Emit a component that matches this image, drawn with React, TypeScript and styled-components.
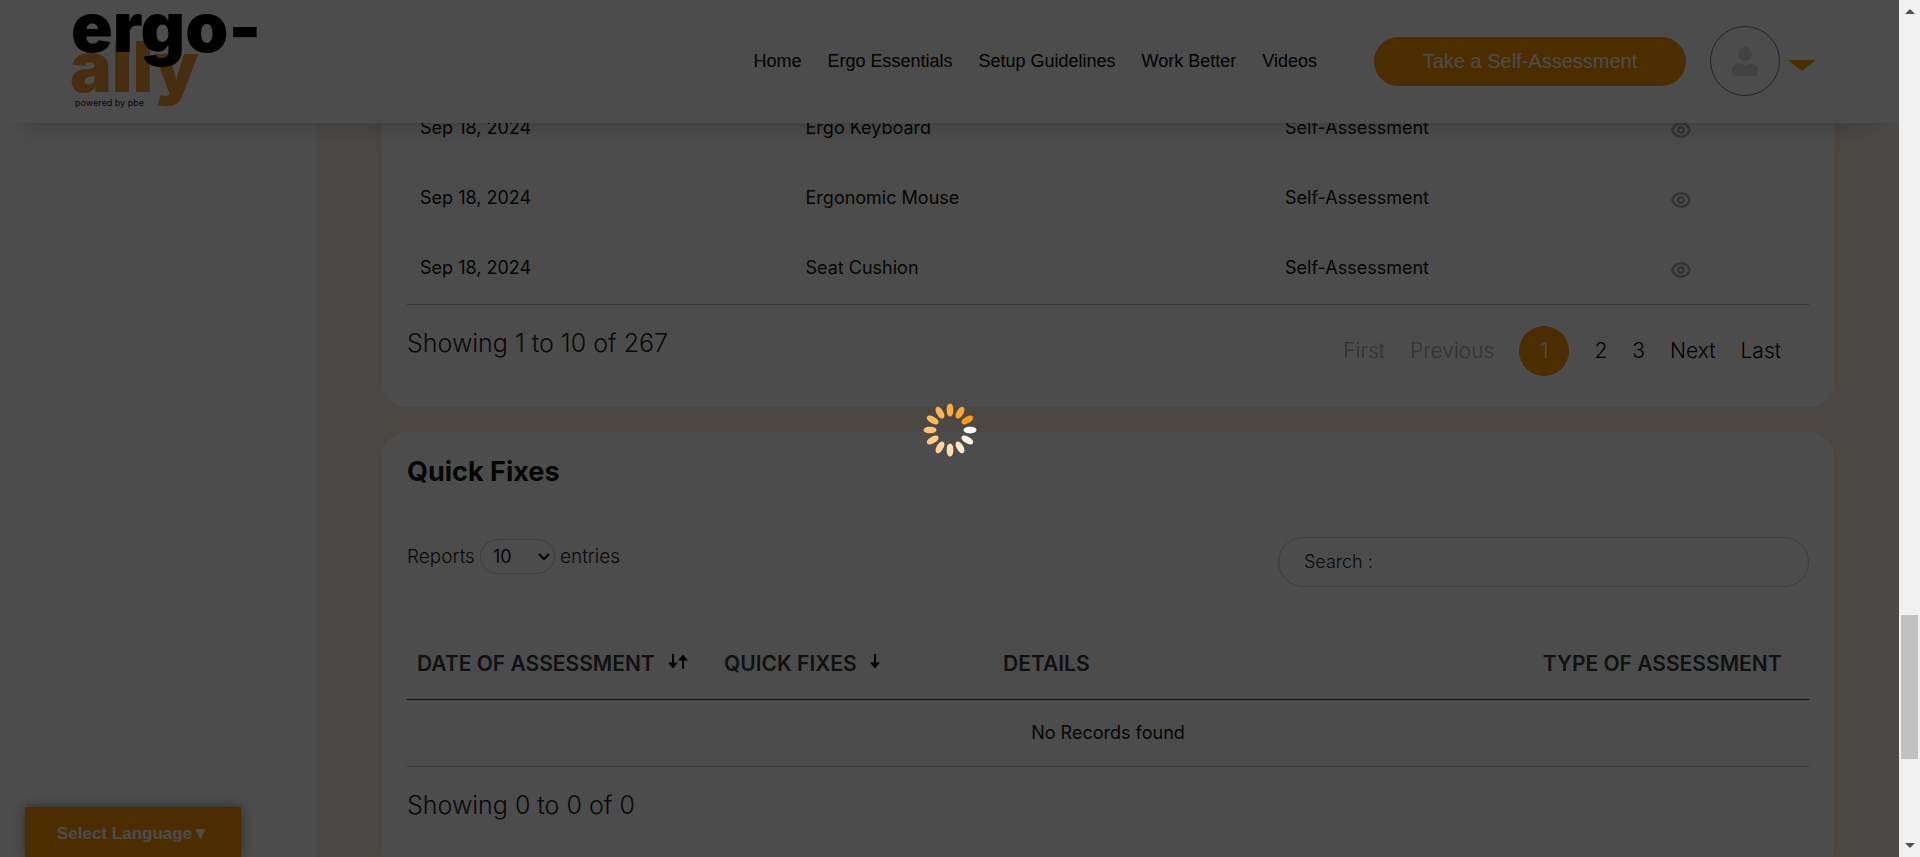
import React from "react";
import styled, { createGlobalStyle } from "styled-components";

const orange = "#ff9600";
const headingFont = `Inter, "Open Sans", sans-serif`;
const navFont = `"Liberation Sans", Arial, sans-serif`;

const GlobalStyle = createGlobalStyle`
  *, *::before, *::after { box-sizing: border-box; }
  html, body { margin: 0; }
  body {
    background: #fff;
    color: #222;
    font-family: ${headingFont};
    font-size: 18px;
    overflow: hidden;
  }
  a { color: inherit; text-decoration: none; }
  button, select, input { font: inherit; color: inherit; }
`;

const Shell = styled.div`
  display: flex;
  height: 100vh;
  overflow: hidden;
`;

const Page = styled.div`
  position: relative;
  flex: 1;
  min-width: 0;
  overflow: hidden;
`;

const Header = styled.header`
  position: absolute;
  z-index: 2;
  top: 0;
  left: 0;
  right: 0;
  height: 123px;
  padding: 0 83px 1px 72px;
  display: flex;
  align-items: center;
  background: #fff;
  box-shadow: 0 24px 24px -22px rgba(0, 0, 0, 0.22);
`;

const LogoLink = styled.a`
  display: block;
  height: 98px;
  margin-right: auto;

  svg { display: block; overflow: visible; }
`;

const Nav = styled.nav`
  display: flex;
  gap: 26px;
  margin-right: 57px;
  font-family: ${navFont};
  font-size: 18px;
  line-height: 24px;
  color: #000;
`;

const AssessButton = styled.button`
  width: 312px;
  height: 49px;
  border: 0;
  border-radius: 25px;
  background: ${orange};
  color: #fff;
  font-family: ${navFont};
  font-size: 20px;
  margin-right: 24px;
`;

const ProfileButton = styled.button`
  display: flex;
  align-items: center;
  gap: 8px;
  padding: 0;
  border: 0;
  background: none;
`;

const Avatar = styled.span`
  display: grid;
  place-items: center;
  width: 70px;
  height: 70px;
  border: 1px solid #777;
  border-radius: 50%;
`;

const Caret = styled.span`
  margin-top: 8px;
  border: 14px solid transparent;
  border-top: 11px solid ${orange};
  border-bottom: 0;
`;

const Body = styled.div`
  display: flex;
  min-height: 100%;
`;

const Sidebar = styled.aside`
  flex: 0 0 316px;
  background: #fff;
`;

const Main = styled.main`
  flex: 1;
  min-width: 0;
  display: flex;
  flex-direction: column;
  gap: 25px;
  padding: 0 65px 0 66px;
  background: #fbf5ec;
`;

const Card = styled.section<{ $continued?: boolean }>`
  padding: ${(p) => (p.$continued ? "94px 25px 31px" : "24px 25px 50px")};
  border-radius: ${(p) => (p.$continued ? "0 0 25px 25px" : "25px")};
  background: #fff;
  box-shadow: 0 0 25px rgba(255, 110, 60, 0.16);
`;

const CardTitle = styled.h2`
  margin: 0;
  font-size: 27px;
  line-height: 32px;
  font-weight: 700;
  color: #111;
`;

const Table = styled.table`
  width: 100%;
  table-layout: fixed;
  border-collapse: collapse;
  border-bottom: 1px solid #b8b8b8;
  color: #111;
`;

const Cell = styled.td`
  height: 70px;
  padding: 0 13px 2px;
  line-height: 24px;
`;

const EmptyCell = styled.td`
  height: 67px;
  padding: 0 0 2px;
  text-align: center;
`;

const HeadCell = styled.th`
  height: 72px;
  padding: 2px 10px 0;
  border-bottom: 1px solid #333;
  font-size: 21px;
  line-height: 24px;
  font-weight: 600;
  text-align: left;
  white-space: nowrap;
  color: #3a3a3f;
`;

const SortButton = styled.button`
  padding: 0;
  border: 0;
  background: none;
  margin-left: 13px;
  vertical-align: 2px;

  svg { display: block; }
`;

const ViewButton = styled.button`
  display: block;
  margin-top: 4px;
  padding: 0;
  border: 0;
  background: none;

  svg { display: block; }
`;

const TableFooter = styled.div`
  display: flex;
  justify-content: space-between;
  align-items: flex-start;
  padding-top: 21px;
`;

const Count = styled.p`
  margin: 0;
  font-size: 25px;
  line-height: 34px;
  font-weight: 300;
`;

const Pagination = styled.nav`
  display: flex;
  align-items: center;
  gap: 25px;
  padding-right: 28px;
  font-size: 21px;
  line-height: 24px;
  font-weight: 300;
  color: #000;
`;

const PageLink = styled.a<{ $muted?: boolean }>`
  color: ${(p) => (p.$muted ? "#b5aaa8" : "inherit")};
`;

const CurrentPage = styled.a`
  width: 50px;
  height: 50px;
  border-radius: 50%;
  background: ${orange};
  color: #fff;
  line-height: 50px;
  text-align: center;
`;

const Controls = styled.div`
  display: flex;
  justify-content: space-between;
  align-items: flex-start;
  margin: 49px 0 41px;
  font-weight: 300;
`;

const LengthLabel = styled.label`
  display: flex;
  align-items: center;
  gap: 5px;
  padding-top: 2px;
  font-size: 19px;
`;

const SelectBox = styled.span`
  position: relative;
  display: block;

  svg {
    position: absolute;
    right: 5px;
    top: 14px;
    pointer-events: none;
  }
`;

const LengthSelect = styled.select`
  appearance: none;
  display: block;
  width: 75px;
  height: 35px;
  padding: 0 12px;
  border: 1px solid #ccc;
  border-radius: 18px;
  background: #fff;
  font-size: 18px;
  font-weight: 400;
`;

const SearchInput = styled.input`
  width: 531px;
  height: 50px;
  padding: 0 25px;
  border: 1px solid #ccc;
  border-radius: 25px;
  background: #fff;
  outline: 0;

  &::placeholder { color: #222; opacity: 1; }
`;

const LanguageButton = styled.button`
  position: absolute;
  z-index: 2;
  left: 25px;
  bottom: 0;
  width: 216px;
  height: 50px;
  padding: 3px 0 0;
  border: 0;
  background: ${orange};
  color: #fff;
  font-family: ${navFont};
  font-size: 17px;
  font-weight: 700;
  box-shadow: 0 0 12px rgba(0, 0, 0, 0.45);
`;

const Overlay = styled.div`
  position: absolute;
  z-index: 3;
  inset: 0;
  display: grid;
  place-items: center;
  padding-top: 2px;
  background: rgba(0, 0, 0, 0.7);
`;

const ScrollTrack = styled.div`
  flex: 0 0 21px;
  display: flex;
  flex-direction: column;
  align-items: center;
  padding: 9px 0;
  background: #f1f1f1;
`;

const ScrollSpace = styled.div<{ $grow: number }>`
  flex: ${(p) => p.$grow} 1 0;
`;

const ScrollThumb = styled.div`
  flex: 144 1 0;
  width: 17px;
  background: #c1c1c1;
`;

const ScrollArrow = styled.span<{ $down?: boolean }>`
  border: 5px solid transparent;
  ${(p) =>
    p.$down
      ? "border-top-color: #505050; border-bottom: 0;"
      : "border-bottom-color: #505050; border-top: 0;"}
`;

function Logo() {
  return (
    <svg width="188" height="98" viewBox="0 0 188 98" role="img" aria-label="ergo-ally, powered by pbe">
      <g fontFamily={headingFont} fontWeight="900">
        <text x="-2" y="80" fontSize="70" fill="#f29a38">ally</text>
        <text x="-1" y="40" fontSize="69" fill="#000">ergo-</text>
      </g>
      <text x="3" y="94" fontFamily={headingFont} fontSize="9" fill="#222">powered by pbe</text>
    </svg>
  );
}

function UserIcon() {
  return (
    <svg width="26" height="29" viewBox="0 0 26 29" fill="#dcdcdc" aria-hidden="true">
      <circle cx="13" cy="7" r="7" />
      <path d="M0 25V23a6.500 6.500 0 0 1 6.500-6.500C9 16.500 10 18 13 18s4-1.500 6.500-1.500A6.500 6.500 0 0 1 26 23v2a4 4 0 0 1-4 4H4a4 4 0 0 1-4-4z" />
    </svg>
  );
}

function EyeIcon() {
  return (
    <svg width="20" height="16" viewBox="0 0 20 16" fill="none" stroke="#b0b0b0" strokeWidth="2.400" aria-hidden="true">
      <path d="M1.200 8C2.800 3.800 6 1.300 10 1.300S17.200 3.800 18.800 8c-1.600 4.200-4.800 6.700-8.800 6.700S2.800 12.200 1.200 8z" />
      <circle cx="10" cy="8" r="2.800" />
    </svg>
  );
}

function SortIcon({ both }: { both?: boolean }) {
  return (
    <svg width={both ? 20 : 10} height="15" viewBox={both ? "0 0 20 15" : "0 0 10 15"} fill="none" stroke="#000" strokeWidth="2" aria-hidden="true">
      <path d="M5 0v12" />
      <path d="M0 8.500h10L5 14.500z" fill="#000" stroke="none" />
      {both && (
        <>
          <path d="M15 3v12" />
          <path d="M10 6.500h10L15 .5z" fill="#000" stroke="none" />
        </>
      )}
    </svg>
  );
}

const petals = ["#ffffff", "#ff9a14", "#ffa62e", "#ffae42", "#ffb452", "#ffba60", "#ffc272", "#ffcb88", "#ffd39c", "#ffdcb2", "#ffe6ca", "#fff2e4"];

function Spinner() {
  return (
    <svg width="54" height="54" viewBox="-27 -27 54 54" role="img" aria-label="Loading">
      {petals.map((fill, i) => (
        <rect key={fill} x="13.500" y="-3.300" width="13" height="6.600" rx="5.500" ry="3.300" fill={fill} transform={`rotate(${-30 * i})`} />
      ))}
    </svg>
  );
}

const links = ["Home", "Ergo Essentials", "Setup Guidelines", "Work Better", "Videos"];
const products = ["Ergo Keyboard", "Ergonomic Mouse", "Seat Cushion"];

export default function App() {
  return (
    <>
      <GlobalStyle />
      <Shell>
        <Page>
          <Header>
            <LogoLink href="#home"><Logo /></LogoLink>
            <Nav>
              {links.map((l) => <a key={l} href="#nav">{l}</a>)}
            </Nav>
            <AssessButton type="button">Take a Self-Assessment</AssessButton>
            <ProfileButton type="button" aria-label="Profile menu">
              <Avatar><UserIcon /></Avatar>
              <Caret />
            </ProfileButton>
          </Header>

          <Body>
            <Sidebar />
            <Main>
              <Card $continued>
                <Table>
                  <colgroup>
                    <col style={{ width: "27.5%" }} />
                    <col style={{ width: "34.2%" }} />
                    <col style={{ width: "27.5%" }} />
                    <col />
                  </colgroup>
                  <tbody>
                    {products.map((name) => (
                      <tr key={name}>
                        <Cell>Sep 18, 2024</Cell>
                        <Cell>{name}</Cell>
                        <Cell>Self-Assessment</Cell>
                        <Cell>
                          <ViewButton type="button" aria-label={`View ${name}`}><EyeIcon /></ViewButton>
                        </Cell>
                      </tr>
                    ))}
                  </tbody>
                </Table>
                <TableFooter>
                  <Count>Showing 1 to 10 of 267</Count>
                  <Pagination aria-label="Pages">
                    <PageLink $muted href="#first">First</PageLink>
                    <PageLink $muted href="#previous">Previous</PageLink>
                    <CurrentPage href="#1" aria-current="page">1</CurrentPage>
                    <PageLink href="#2">2</PageLink>
                    <PageLink href="#3">3</PageLink>
                    <PageLink href="#next">Next</PageLink>
                    <PageLink href="#last">Last</PageLink>
                  </Pagination>
                </TableFooter>
              </Card>

              <Card>
                <CardTitle>Quick Fixes</CardTitle>
                <Controls>
                  <LengthLabel>
                    Reports
                    <SelectBox>
                      <LengthSelect defaultValue="10">
                        <option>10</option>
                        <option>25</option>
                        <option>50</option>
                      </LengthSelect>
                      <svg width="12" height="8" viewBox="0 0 12 8" fill="none" stroke="#000" strokeWidth="2" aria-hidden="true">
                        <path d="M1 1l5 5 5-5" />
                      </svg>
                    </SelectBox>
                    entries
                  </LengthLabel>
                  <SearchInput type="search" aria-label="Search" placeholder="Search :" />
                </Controls>
                <Table>
                  <colgroup>
                    <col style={{ width: "21.9%" }} />
                    <col style={{ width: "19.9%" }} />
                    <col style={{ width: "38.5%" }} />
                    <col />
                  </colgroup>
                  <thead>
                    <tr>
                      <HeadCell>
                        DATE OF ASSESSMENT
                        <SortButton type="button" aria-label="Sort by date"><SortIcon both /></SortButton>
                      </HeadCell>
                      <HeadCell>
                        QUICK FIXES
                        <SortButton type="button" aria-label="Sort by quick fix"><SortIcon /></SortButton>
                      </HeadCell>
                      <HeadCell>DETAILS</HeadCell>
                      <HeadCell>TYPE OF ASSESSMENT</HeadCell>
                    </tr>
                  </thead>
                  <tbody>
                    <tr><EmptyCell colSpan={4}>No Records found</EmptyCell></tr>
                  </tbody>
                </Table>
                <TableFooter>
                  <Count>Showing 0 to 0 of 0</Count>
                </TableFooter>
              </Card>
            </Main>
          </Body>

          <LanguageButton type="button">Select Language▼</LanguageButton>
          <Overlay><Spinner /></Overlay>
        </Page>

        <ScrollTrack aria-hidden="true">
          <ScrollArrow />
          <ScrollSpace $grow={601} />
          <ScrollThumb />
          <ScrollSpace $grow={84} />
          <ScrollArrow $down />
        </ScrollTrack>
      </Shell>
    </>
  );
}
